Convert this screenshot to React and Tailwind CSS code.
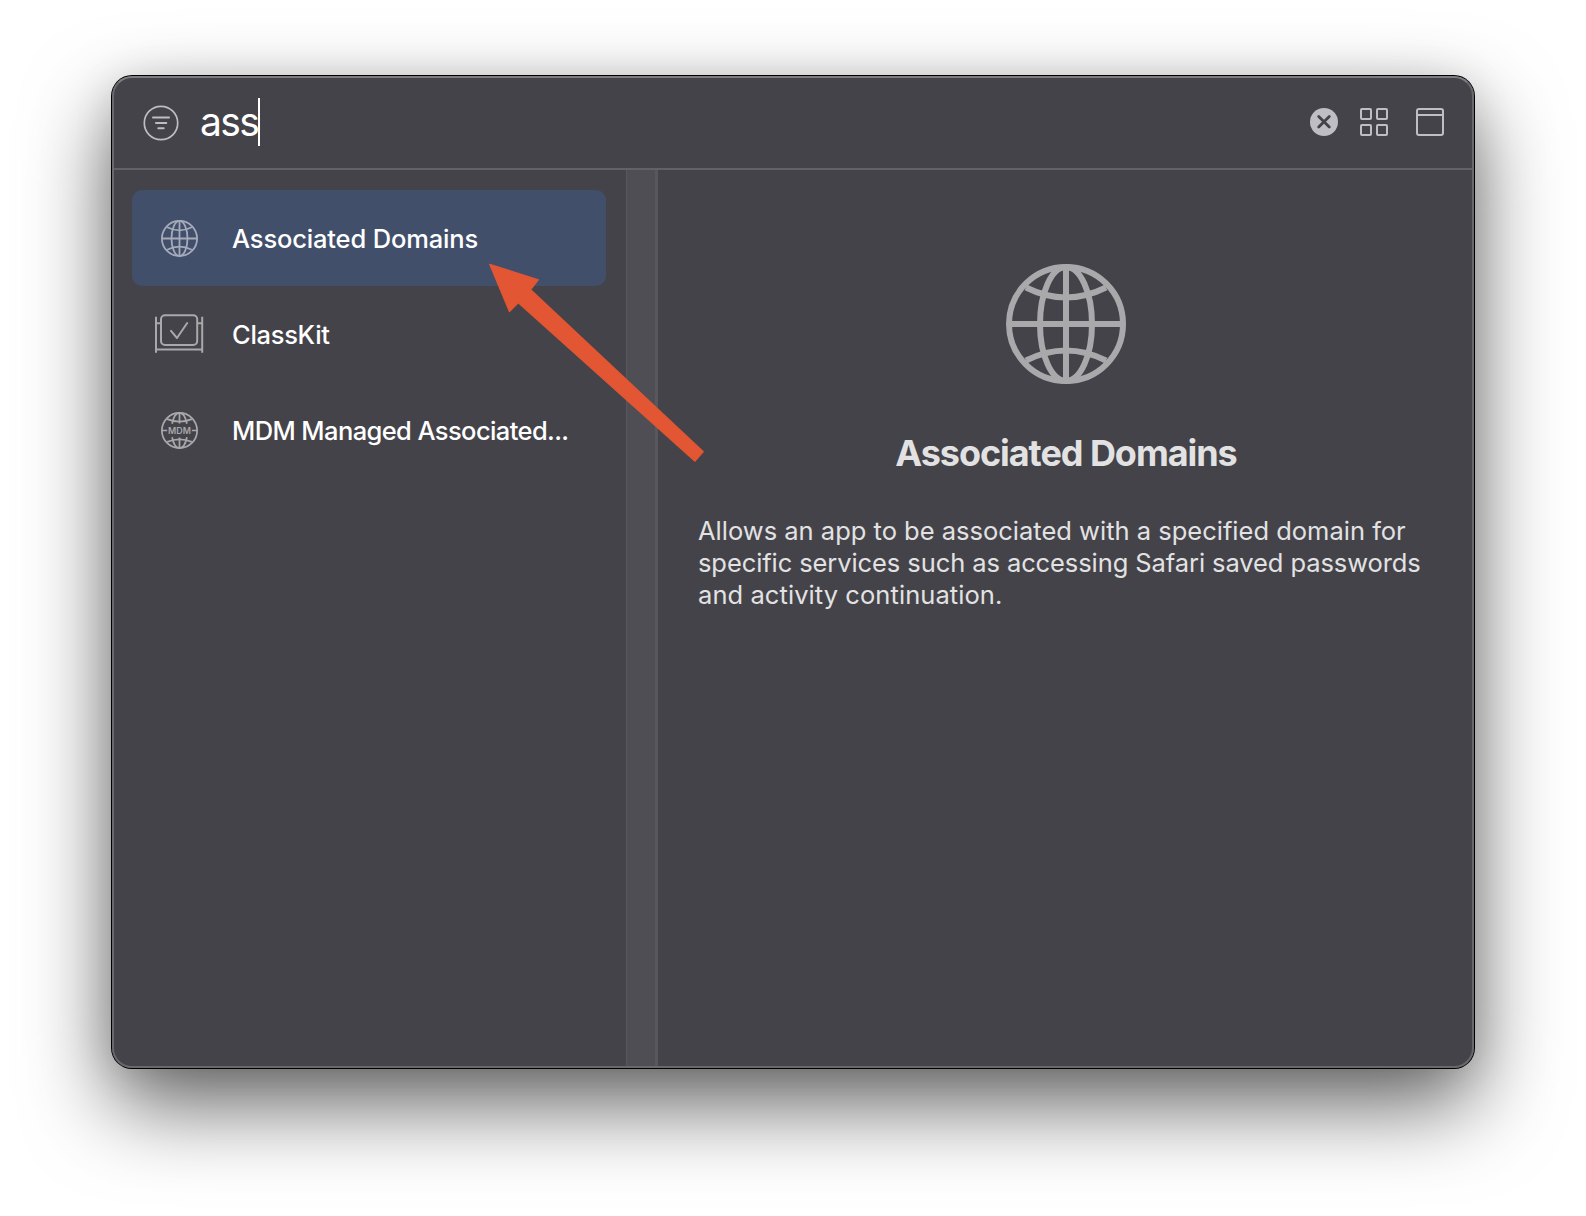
import React from "react";

function Globe({ className, size, stroke, mdm }) {
  return (
    <svg className={className} width={size} height={size} viewBox="-60 -60 120 120" fill="none" stroke="currentColor" strokeWidth={stroke}>
      <circle r={60 - stroke / 2} />
      {mdm ? (
        <>
          <path d="M0-57V-23M0 23V57M-57 0H-40M40 0H57" />
          <path d="M-24-22C-20-42-12-57 0-57C12-57 20-42 24-22M-24 22C-20 42-12 57 0 57C12 57 20 42 24 22" />
          <path d="M-40-37Q0-21 40-37M-40 37Q0 21 40 37" />
          <text x="0" y="10" textAnchor="middle" fontSize="29" fontWeight="600" fontFamily="Inter, sans-serif" fill="currentColor" stroke="none">MDM</text>
        </>
      ) : (
        <>
          <path d="M0-57V57M-57 0H57" />
          <ellipse rx="26" ry="57" />
          <path d="M-40-36.5Q0-16.5 40-36.5M-40 36.5Q0 16.5 40 36.5" />
        </>
      )}
    </svg>
  );
}

function ClassKitIcon() {
  return (
    <svg className="mr-0.5 mb-0.5" width="50" height="42" viewBox="154 312 50 42" fill="none" stroke="currentColor" strokeWidth="2">
      <rect x="161" y="315.3" width="36.2" height="29.6" rx="4" />
      <path d="M156 316.8V352.8M202.2 316.8V352.8M156 323.3H161M197.2 323.3H202.2M156 349.5H202.2" />
      <path d="M171 330.8L177 338L187.2 323" strokeLinecap="round" strokeLinejoin="round" />
    </svg>
  );
}

function FilterIcon() {
  return (
    <svg className="mt-0.5" width="36" height="36" viewBox="-18 -18 36 36" fill="none" stroke="#bebdc3" strokeLinecap="round">
      <circle r="16.7" strokeWidth="1.7" />
      <path d="M-8-5.4H8M-5-.1H5.3M-2.7 5.3H2.7" strokeWidth="2" />
    </svg>
  );
}

function Row({ icon, label, selected, tracking }) {
  return (
    <li className={"flex h-24 items-center rounded-[10px] " + (selected ? "bg-[#424f6b] text-[#a5abba]" : "text-[#a9a8ab]")}>
      <span className="flex w-[95px] shrink-0 justify-center">{icon}</span>
      <span className={"ml-[5px] mt-0.5 whitespace-nowrap text-[25.5px] font-medium text-white " + tracking}>{label}</span>
    </li>
  );
}

export default function App() {
  return (
    <div className="h-[1216px] w-[1586px] overflow-hidden bg-white px-28 pt-[76px] font-['Inter',sans-serif]">
      <div className="relative flex h-[992px] w-[1362px] flex-col rounded-[20px] bg-[#444349] shadow-[0_0_0_1px_#000,0_36px_86px_rgba(0,0,0,0.62),0_4px_40px_rgba(0,0,0,0.1)]">
        <header className="flex h-[94px] shrink-0 items-center border-b-2 border-[#626166] pl-[31px] pr-[30px]">
          <FilterIcon />
          <span className="ml-[21px] text-[39px] leading-[48px] tracking-[-1.6px] text-white">ass</span>
          <span className="h-12 w-0.5 bg-white" />
          <div className="ml-auto flex items-center">
            <svg width="28" height="28" viewBox="0 0 28 28">
              <circle cx="14" cy="14" r="14" fill="#bfbec4" />
              <path d="M8.7 8.5L19.3 19.1M19.3 8.5L8.7 19.1" stroke="#444349" strokeWidth="2.8" strokeLinecap="round" />
            </svg>
            <svg className="ml-[22px]" width="28" height="28" fill="none" stroke="#bfbec4" strokeWidth="2">
              <rect x="1" y="1" width="10" height="10" rx="1" />
              <rect x="17" y="1" width="10" height="10" rx="1" />
              <rect x="1" y="17" width="10" height="10" rx="1" />
              <rect x="17" y="17" width="10" height="10" rx="1" />
            </svg>
            <svg className="ml-7" width="28" height="28" fill="none" stroke="#bfbec4" strokeWidth="2">
              <rect x="1" y="1" width="26" height="26" rx="2" />
              <path d="M1 7H27" />
            </svg>
          </div>
        </header>
        <main className="flex min-h-0 flex-1">
          <ul className="w-[514px] shrink-0 px-5 pt-5">
            <Row selected label="Associated Domains" tracking="tracking-[-0.16px]" icon={<Globe size={37} stroke={5.8} />} />
            <Row label="ClassKit" tracking="tracking-[-0.3px]" icon={<ClassKitIcon />} />
            <Row label="MDM Managed Associated..." tracking="tracking-[-0.6px]" icon={<Globe size={37} stroke={5.6} mdm />} />
          </ul>
          <div className="w-8 shrink-0 border-l border-r-[3px] border-[#58575d] bg-[#4f4e54]" />
          <section className="flex flex-1 flex-col px-10 pt-[94px] text-[#e2e2e3]">
            <Globe className="self-center text-[#a9a8ab]" size={120} stroke={6} />
            <h1 className="mt-[47px] self-center whitespace-nowrap text-[36px] font-bold leading-[44px] tracking-[-1.05px]">Associated Domains</h1>
            <p className="mt-[40px] whitespace-nowrap text-[25.5px] leading-8">
              <span>Allows an app to be associated with a specified domain for</span><br />
              <span className="tracking-[-0.09px]">specific services such as accessing Safari saved passwords</span><br />
              <span className="tracking-[0.07px]">and activity continuation.</span>
            </p>
          </section>
        </main>
        <div className="pointer-events-none absolute inset-0 rounded-[20px] border-2 border-t-[#7d7d81] border-x-[#69686d] border-b-[#69686d]" />
        <svg className="pointer-events-none absolute left-[370px] top-[180px]" width="230" height="214" viewBox="482 256 230 214">
          <path d="M489.7 264.3L538.4 279.7L530.7 289.7L703.3 451.6L695 461.2L518.3 302.8L509.5 311.7Z" fill="#e25633" stroke="#e25633" strokeWidth="1.2" strokeLinejoin="round" />
        </svg>
      </div>
    </div>
  );
}
